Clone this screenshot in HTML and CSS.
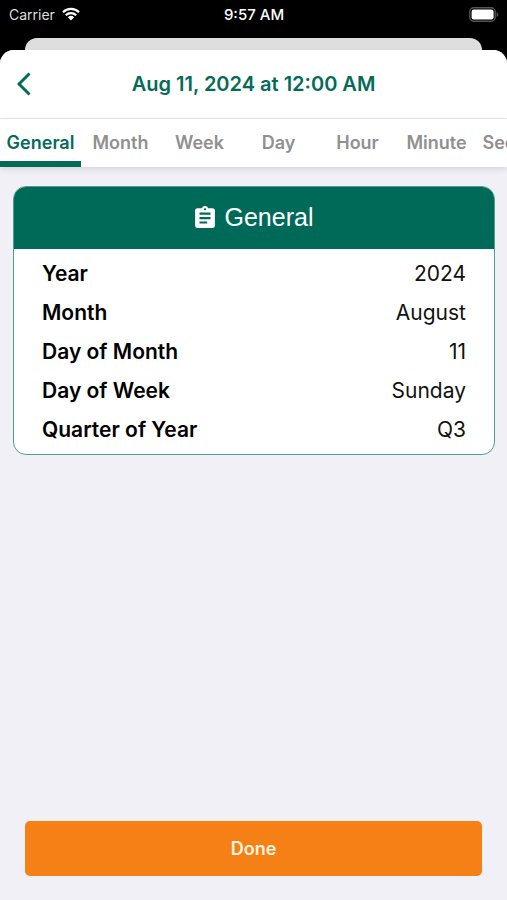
FILE: index.html
```html
<!DOCTYPE html>
<html lang="en">
<head>
<meta charset="utf-8">
<meta name="viewport" content="width=device-width, initial-scale=1">
<title>Date details</title>
<link rel="stylesheet" href="styles.css">
</head>
<body>
<div class="status">
  <div class="carrier">
    <span>Carrier</span>
    <svg class="wifi" viewBox="0 0 18 14" aria-hidden="true">
      <path d="M1 5.2a11.4 11.4 0 0 1 16 0M3.8 8.2a7.4 7.4 0 0 1 10.4 0" fill="none" stroke="currentColor" stroke-width="2.3"/>
      <path d="M5.9 10.2a4.5 4.5 0 0 1 6.2 0L9 13.6z" fill="currentColor"/>
    </svg>
  </div>
  <span class="clock">9:57 AM</span>
  <svg class="battery" viewBox="0 0 30 15" aria-hidden="true">
    <rect x=".8" y=".8" width="25.4" height="13.4" rx="4" fill="none" stroke="#555" stroke-width="1.4"/>
    <rect x="2.6" y="2.6" width="22" height="9.8" rx="2.2" fill="#fff"/>
    <path d="M27.6 5v5c1-.4 1.7-1.300 1.700-2.500s-.7-2.100-1.700-2.500z" fill="#555"/>
  </svg>
</div>
<div class="behind"></div>
<main class="sheet">
  <header class="bar">
    <button class="back" aria-label="Back">
      <svg viewBox="0 0 14 24" aria-hidden="true"><path d="M12.500 1.500 2 12l10.500 10.500" fill="none" stroke="currentColor" stroke-width="3"/></svg>
    </button>
    <h1>Aug 11, 2024 at 12:00 AM</h1>
  </header>
  <nav class="tabs">
    <a class="tab active" href="#general" aria-current="page">General</a>
    <a class="tab" href="#month">Month</a>
    <a class="tab" href="#week">Week</a>
    <a class="tab" href="#day">Day</a>
    <a class="tab" href="#hour">Hour</a>
    <a class="tab" href="#minute">Minute</a>
    <a class="tab" href="#second">Second</a>
  </nav>
  <section class="card" id="general">
    <h2>
      <svg viewBox="3 1 18 20" aria-hidden="true"><path fill="currentColor" d="M19 3h-4.180C14.400 1.840 13.300 1 12 1s-2.400.84-2.820 2H5c-1.100 0-2 .9-2 2v14c0 1.100.9 2 2 2h14c1.100 0 2-.9 2-2V5c0-1.100-.9-2-2-2zm-7 0c.55 0 1 .45 1 1s-.45 1-1 1-1-.45-1-1 .45-1 1-1zm2 14H7v-2h7v2zm3-4H7v-2h10v2zm0-4H7V7h10v2z"/></svg>
      General
    </h2>
    <dl>
      <div><dt>Year</dt><dd>2024</dd></div>
      <div><dt>Month</dt><dd>August</dd></div>
      <div><dt>Day of Month</dt><dd>11</dd></div>
      <div><dt>Day of Week</dt><dd>Sunday</dd></div>
      <div><dt>Quarter of Year</dt><dd>Q3</dd></div>
    </dl>
  </section>
  <button class="done">Done</button>
</main>
</body>
</html>
```
FILE: styles.css
```css
* { box-sizing: border-box; }

body {
  margin: 0;
  min-height: 100vh;
  display: flex;
  flex-direction: column;
  background: #000;
  font-family: Inter, "Liberation Sans", sans-serif;
  color: #111;
}

h1, h2, dl, dd { margin: 0; }

button { border: 0; font-family: inherit; cursor: pointer; }

.status {
  display: grid;
  grid-template-columns: 1fr auto 1fr;
  align-items: center;
  height: 28px;
  margin-bottom: 10px;
  padding: 0 8px 0 9px;
  color: #fff;
  font-size: 14px;
}

.carrier { display: flex; align-items: center; gap: 7px; color: #ddd; }
.wifi { width: 18px; height: 14px; color: #fff; }
.clock { font-size: 15px; font-weight: 500; }
.battery { width: 30px; height: 15px; justify-self: end; }

.behind {
  height: 12px;
  margin: 0 25px;
  border-radius: 12px 12px 0 0;
  background: #dedede;
}

.sheet {
  flex: 1;
  display: flex;
  flex-direction: column;
  overflow: hidden;
  border-radius: 14px 14px 0 0;
  background: #f0f0f6;
}

.bar {
  display: grid;
  grid-template-columns: 48px 1fr 48px;
  align-items: center;
  height: 69px;
  border-bottom: 1px solid #e6e6e8;
  background: #fff;
  color: #046b59;
}

.back {
  height: 48px;
  padding: 0;
  background: none;
  color: inherit;
}
.back svg { display: block; width: 14px; height: 24px; margin: 0 auto; }

h1 { font-size: 20px; font-weight: 600; text-align: center; }

.tabs {
  display: flex;
  flex: none;
  height: 48px;
  overflow: hidden;
  background: #fff;
  box-shadow: 0 2px 6px #0000001f;
  position: relative;
}

.tab {
  flex: none;
  width: 79px;
  border-bottom: 6px solid transparent;
  color: #909090;
  font-size: 18px;
  font-weight: 600;
  line-height: 48px;
  text-align: center;
  text-decoration: none;
}
.tab.active { width: 81px; border-color: #046b59; color: #046b59; }

.card {
  margin: 19px 12px auto 13px;
  overflow: hidden;
  border: 1px solid #4f9f91;
  border-radius: 13px;
  background: #fff;
}

h2 {
  display: flex;
  align-items: center;
  justify-content: center;
  gap: 10px;
  height: 62px;
  padding-bottom: 2px;
  background: #006a59;
  color: #fff;
  font: 25px "Liberation Sans", sans-serif;
}
h2 svg { width: 20px; height: 22px; }

dl { padding: 5px 28px; font-size: 21px; line-height: 39px; }
dl div { display: flex; justify-content: space-between; }
dt { color: #000; font-weight: 600; }

.done {
  height: 55px;
  margin: 24px 25px;
  border-radius: 5px;
  background: #f58015;
  color: #fff3e0;
  font-size: 18px;
  font-weight: 600;
}
```
